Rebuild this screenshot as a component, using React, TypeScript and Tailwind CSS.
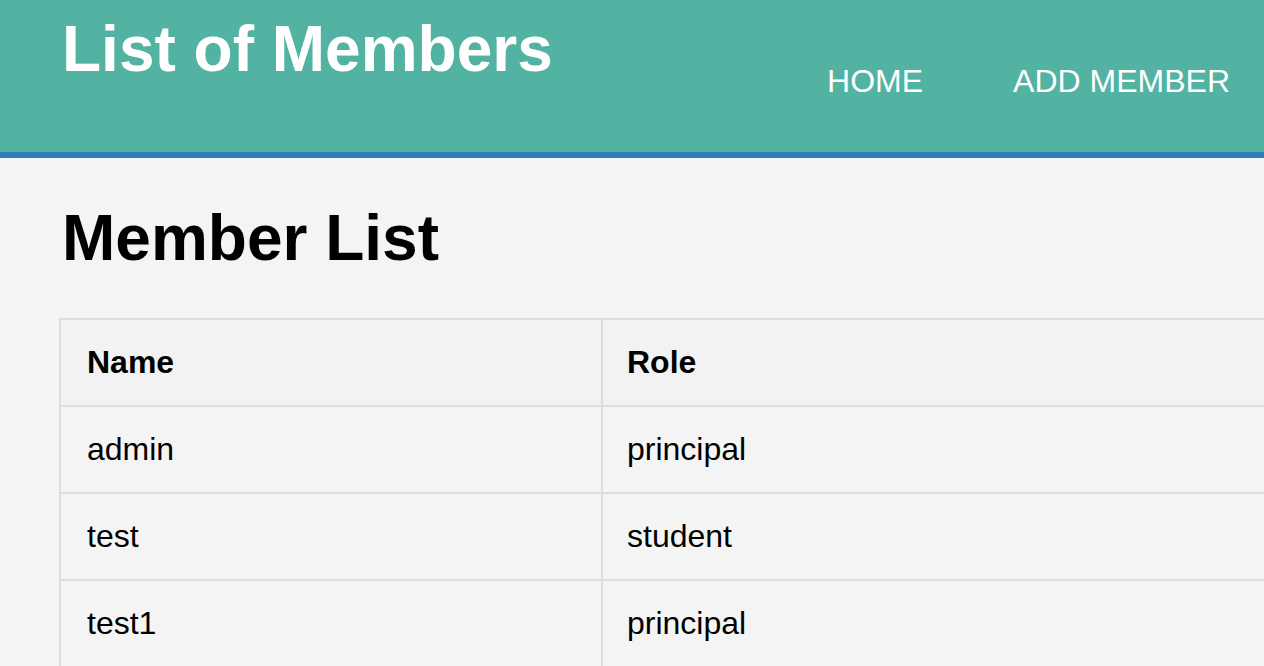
import React from "react";

const rows = [
  { name: "admin", role: "principal" },
  { name: "test", role: "student" },
  { name: "test1", role: "principal" },
];

export default function App() {
  return (
    <div className="h-[666px] w-[1264px] overflow-hidden bg-[#f4f4f4] font-['Liberation_Sans',Arial,sans-serif] text-black">
      <header className="flex h-[158px] items-start justify-between border-b-[6px] border-[#2d7fbe] bg-[#52b3a2] pl-[62px] pr-[34px]">
        <h1 className="mt-[13px] text-[64px] font-bold leading-[72px] text-white">List of Members</h1>
        <nav className="mt-[63px] flex gap-[90px] text-[32px] leading-[36px] text-white">
          <a>HOME</a>
          <a>ADD MEMBER</a>
        </nav>
      </header>
      <main className="pl-[59px]">
        <h2 className="ml-[3px] mt-[44px] text-[64px] font-bold leading-[72px]">Member List</h2>
        <table className="mt-[44px] w-[1400px] border-collapse text-[32px]">
          <thead>
            <tr className="bg-[#f2f2f2]">
              <th className="w-[542px] border-2 border-[#dddddd] py-[24px] pl-[26px] pr-[24px] text-left font-bold leading-[37px]">Name</th>
              <th className="border-2 border-[#dddddd] py-[24px] pl-[24px] pr-[24px] text-left font-bold leading-[37px]">Role</th>
            </tr>
          </thead>
          <tbody>
            {rows.map((r) => (
              <tr key={r.name}>
                <td className="border-2 border-[#dddddd] py-[24px] pl-[26px] pr-[24px] leading-[37px]">{r.name}</td>
                <td className="border-2 border-[#dddddd] py-[24px] pl-[24px] pr-[24px] leading-[37px]">{r.role}</td>
              </tr>
            ))}
          </tbody>
        </table>
      </main>
    </div>
  );
}
